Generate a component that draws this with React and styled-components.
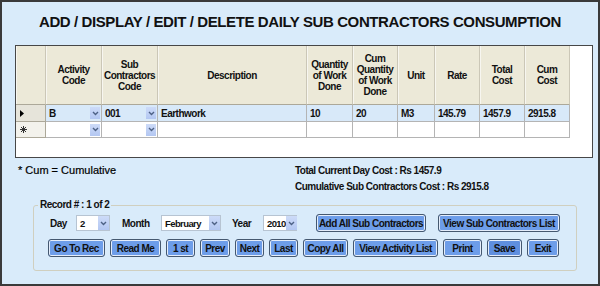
import styled, { createGlobalStyle } from 'styled-components';

const GlobalStyle = createGlobalStyle`
  html, body {
    margin: 0;
    padding: 0;
    background: #d9ebfa;
  }
  body {
    font-family: "Liberation Sans", Arial, sans-serif;
    color: #111;
  }
`;

const Window = styled.div`
  width: 600px;
  height: 286px;
  box-sizing: border-box;
  border: 2px solid #3a3a3a;
  background: #d9ebfa;
  display: flex;
  flex-direction: column;
  overflow: hidden;
`;

const Title = styled.h1`
  margin: 11px 0 15px;
  font-size: 15px;
  line-height: 17px;
  font-weight: bold;
  letter-spacing: -0.4px;
  text-align: center;
  color: #111;
`;

const Grid = styled.div`
  margin-left: 13px;
  width: 578px;
  height: 113px;
  box-sizing: border-box;
  border: 1px solid #474747;
  background: #fff;
  display: grid;
  grid-template-columns: 30px 56px 56px 149px 46px 45px 37px 45px 45px 45px;
  grid-template-rows: 59px 17px 16px;
  align-content: start;
  font-size: 10px;
  font-weight: bold;
  letter-spacing: -0.5px;
`;

const HeadCell = styled.div`
  box-sizing: border-box;
  background: #ece9d8;
  border-right: 1px solid #cbc7b7;
  border-bottom: 1px solid #aca899;
  box-shadow: inset 1px 0 0 #f7f6f0;
  display: flex;
  align-items: center;
  justify-content: center;
  text-align: center;
  line-height: 11px;
  padding: 0 2px;
`;

const RowHead = styled.div`
  box-sizing: border-box;
  background: ${(p) => (p.$current ? '#e6e4da' : '#f3f2ec')};
  border-right: 1px solid #aca899;
  border-bottom: 1px solid #aca899;
  display: flex;
  align-items: center;
  padding-left: 4px;
`;

const Cell = styled.div`
  box-sizing: border-box;
  background: ${(p) => (p.$current ? '#d8e9f9' : '#fff')};
  border-right: 1px solid #b4b4b4;
  border-bottom: 1px solid #b4b4b4;
  display: flex;
  align-items: center;
  justify-content: space-between;
  padding-left: 3px;
  white-space: nowrap;
`;

const CellDrop = styled.span`
  width: 10px;
  height: 12px;
  margin-right: 1px;
  background: linear-gradient(#cddbf8, #b3c7f2);
  display: flex;
  align-items: center;
  justify-content: center;
`;

const Info = styled.div`
  height: 41px;
  box-sizing: border-box;
  padding: 6px 0 0 16px;
  display: grid;
  grid-template-columns: 277px 1fr;
`;

const Note = styled.div`
  font-size: 11px;
  line-height: 13px;
  color: #000;
  -webkit-text-stroke: 0.2px #000;
`;

const Totals = styled.div`
  display: flex;
  flex-direction: column;
  gap: 3px;
  font-size: 10px;
  line-height: 13px;
  font-weight: bold;
  letter-spacing: -0.5px;
`;

const Frame = styled.fieldset`
  margin: 0 0 0 31px;
  width: 544px;
  box-sizing: border-box;
  padding: 3px 0 13px 14px;
  border: 1px solid #d0cfbf;
  border-radius: 3px;
  display: flex;
  flex-direction: column;
  gap: 7px;
`;

const Legend = styled.legend`
  margin-left: -10px;
  padding: 0 2px;
  font-size: 10px;
  line-height: 12px;
  font-weight: bold;
  letter-spacing: -0.5px;
`;

const Row = styled.div`
  display: flex;
  align-items: center;
  height: 18px;
  gap: ${(p) => p.$gap || 0}px;
`;

const Label = styled.span`
  width: ${(p) => p.$w}px;
  margin-left: ${(p) => p.$ml || 0}px;
  padding-left: ${(p) => p.$pl || 0}px;
  box-sizing: border-box;
  font-size: 10px;
  font-weight: bold;
  letter-spacing: -0.5px;
`;

const Select = styled.div`
  width: ${(p) => p.$w}px;
  height: 16px;
  box-sizing: border-box;
  border: 1px solid #b7c4d2;
  background: #fff;
  display: flex;
  align-items: center;
  justify-content: space-between;
  padding-left: 3px;
  font-size: 9.5px;
  font-weight: bold;
  letter-spacing: -0.6px;
  white-space: nowrap;
`;

const SelectDrop = styled.span`
  flex: none;
  width: 11px;
  height: 14px;
  background: linear-gradient(#cddbf8, #b3c7f2);
  display: flex;
  align-items: center;
  justify-content: center;
`;

const Button = styled.button`
  width: ${(p) => p.$w}px;
  margin-left: ${(p) => p.$ml || 0}px;
  height: 18px;
  padding: 0;
  box-sizing: border-box;
  border: 1px solid #45586f;
  border-radius: 3px;
  background: ${(p) => (p.$focus ? '#5f8fdf' : '#6d9de9')};
  box-shadow: inset 0 0 0 1px #e4edfb;
  font-family: "Liberation Sans", Arial, sans-serif;
  font-size: 10px;
  font-weight: bold;
  letter-spacing: -0.5px;
  color: #111;
  white-space: nowrap;
`;

const Chevron = () => (
  <svg width="7" height="5" viewBox="0 0 7 5">
    <path d="M1 1 L3.5 3.5 L6 1" stroke="#4d6185" strokeWidth="1.4" fill="none" />
  </svg>
);

const Arrow = () => (
  <svg width="4" height="7" viewBox="0 0 4 7">
    <polygon points="0,0 4,3.5 0,7" fill="#000" />
  </svg>
);

const Star = () => (
  <svg width="7" height="7" viewBox="0 0 7 7">
    <path d="M3.5 0 V7 M0 3.5 H7 M1 1 L6 6 M6 1 L1 6" stroke="#333" strokeWidth="1" />
  </svg>
);

const headers = [
  '',
  'Activity Code',
  'Sub Contractors Code',
  'Description',
  'Quantity of Work Done',
  'Cum Quantity of Work Done',
  'Unit',
  'Rate',
  'Total Cost',
  'Cum Cost',
];

const record = ['B', '001', 'Earthwork', '10', '20', 'M3', '145.79', '1457.9', '2915.8'];

const navButtons = [
  ['Go To Rec', 57],
  ['Read Me', 51],
  ['1 st', 29],
  ['Prev', 30],
  ['Next', 29],
  ['Last', 29],
  ['Copy All', 45],
  ['View Activity List', 85],
  ['Print', 39],
  ['Save', 35],
  ['Exit', 32],
];

function DataRow({ values, current }) {
  return (
    <>
      <RowHead $current={current}>{current ? <Arrow /> : <Star />}</RowHead>
      {values.map((v, i) => (
        <Cell key={i} $current={current}>
          <span>{v}</span>
          {i < 2 && (
            <CellDrop>
              <Chevron />
            </CellDrop>
          )}
        </Cell>
      ))}
    </>
  );
}

export default function App() {
  return (
    <>
      <GlobalStyle />
      <Window>
        <Title>ADD / DISPLAY / EDIT / DELETE DAILY SUB CONTRACTORS CONSUMPTION</Title>
        <Grid>
          {headers.map((h, i) => (
            <HeadCell key={i}>{h}</HeadCell>
          ))}
          <DataRow values={record} current />
          <DataRow values={record.map(() => '')} />
        </Grid>
        <Info>
          <Note>* Cum = Cumulative</Note>
          <Totals>
            <span>Total Current Day Cost : Rs 1457.9</span>
            <span>Cumulative Sub Contractors Cost : Rs 2915.8</span>
          </Totals>
        </Info>
        <Frame>
          <Legend>Record # : 1 of 2</Legend>
          <Row>
            <Label $w={28} $pl={2}>Day</Label>
            <Select $w={34}>
              2
              <SelectDrop><Chevron /></SelectDrop>
            </Select>
            <Label $w={39} $ml={12}>Month</Label>
            <Select $w={60}>
              February
              <SelectDrop><Chevron /></SelectDrop>
            </Select>
            <Label $w={31} $ml={11}>Year</Label>
            <Select $w={34}>
              2010
              <SelectDrop><Chevron /></SelectDrop>
            </Select>
            <Button $w={110} $ml={19}>Add All Sub Contractors</Button>
            <Button $w={122} $ml={12}>View Sub Contractors List</Button>
          </Row>
          <Row $gap={5}>
            {navButtons.map(([label, w]) => (
              <Button key={label} $w={w} $focus={label === 'Save'}>
                {label}
              </Button>
            ))}
          </Row>
        </Frame>
      </Window>
    </>
  );
}
